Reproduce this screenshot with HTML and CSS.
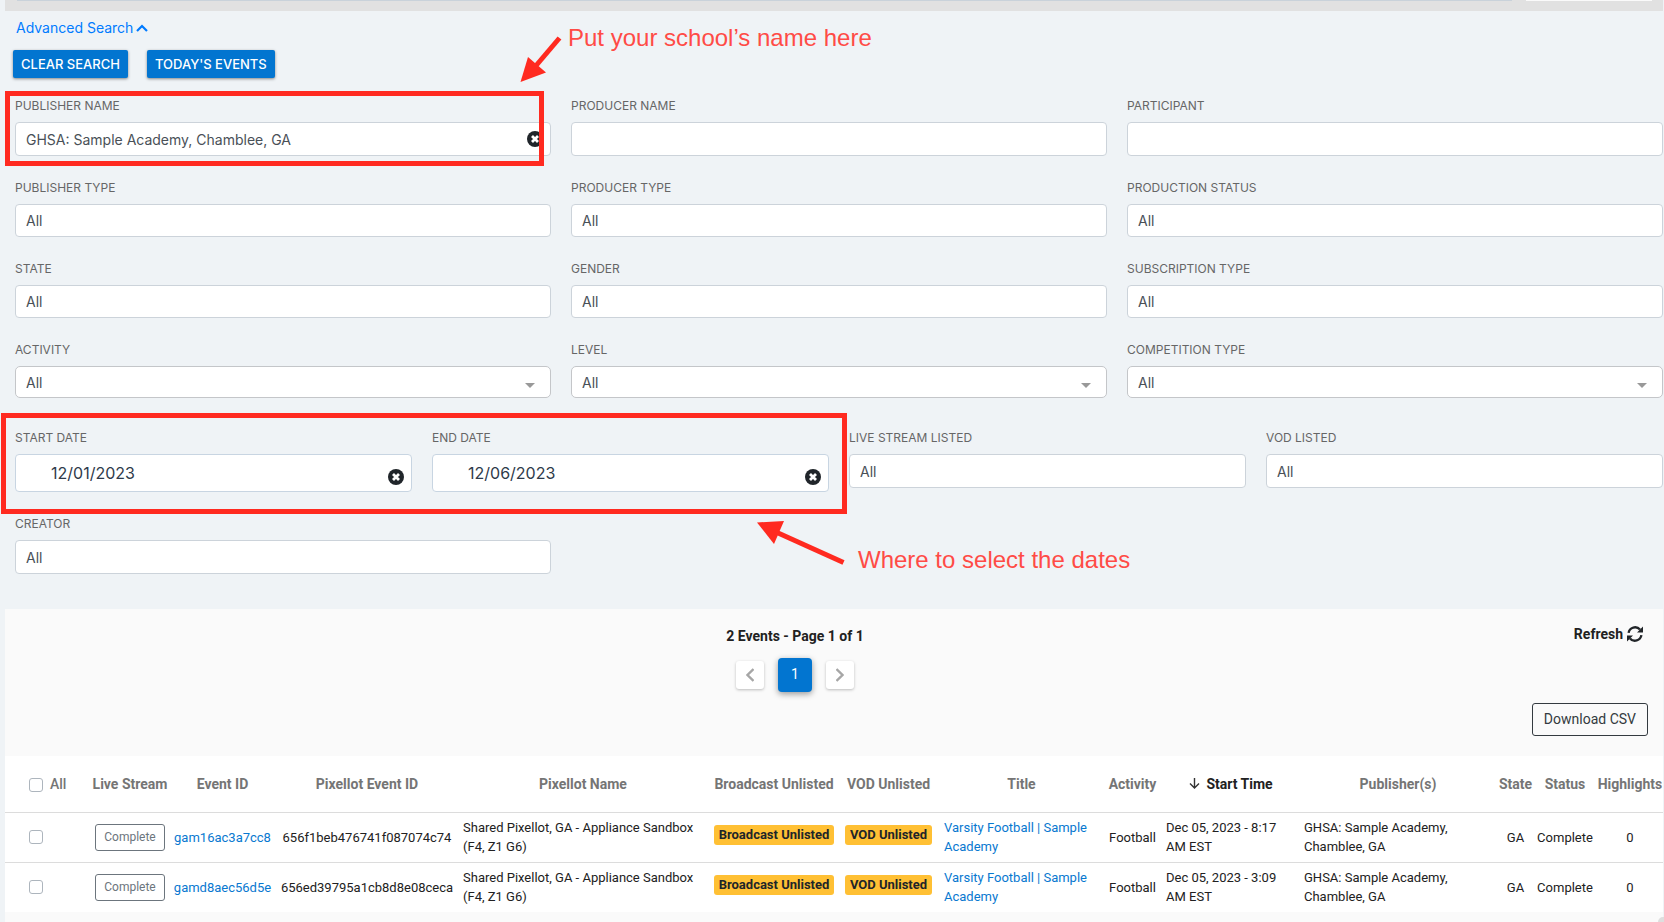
FILE: index.html
```html
<!DOCTYPE html>
<html lang="en">
<head>
<meta charset="utf-8">
<title>Events</title>
<link rel="stylesheet" href="styles.css">
</head>
<body>
<svg class="sprite" aria-hidden="true">
  <symbol id="clear" viewBox="0 0 16 16"><circle cx="8" cy="8" r="8" fill="#20252a"/><path d="M5 5l6 6M11 5l-6 6" stroke="#fff" stroke-width="2.8"/></symbol>
  <symbol id="caret" viewBox="0 0 10 5"><path d="M0 0h10L5 5z" fill="#999"/></symbol>
</svg>
<div class="page">
  <header class="topbar"><span class="topbar-input"></span><span class="topbar-button"></span></header>

  <main class="search">
    <a class="advanced" href="#">Advanced Search
      <svg width="12" height="8" viewBox="0 0 12 8" aria-hidden="true"><path d="M1 7l5-5 5 5" fill="none" stroke="#007bff" stroke-width="2.2"/></svg></a>
    <div class="actions">
      <button class="btn-blue">CLEAR SEARCH</button>
      <button class="btn-blue">TODAY'S EVENTS</button>
    </div>

    <form class="filters">
      <div class="row three">
        <div class="field marked"><label for="publisher">PUBLISHER NAME</label>
          <div class="box"><input id="publisher" type="text" value="GHSA: Sample Academy, Chamblee, GA"><button type="button" class="clear" aria-label="Clear"><svg><use href="#clear"/></svg></button></div></div>
        <div class="field"><label for="producer">PRODUCER NAME</label><input id="producer" type="text"></div>
        <div class="field"><label for="participant">PARTICIPANT</label><input id="participant" type="text"></div>
      </div>
      <div class="row three short">
        <div class="field"><label for="ptype">PUBLISHER TYPE</label><select id="ptype"><option>All</option></select></div>
        <div class="field"><label for="prtype">PRODUCER TYPE</label><select id="prtype"><option>All</option></select></div>
        <div class="field"><label for="pstatus">PRODUCTION STATUS</label><select id="pstatus"><option>All</option></select></div>
      </div>
      <div class="row three short">
        <div class="field"><label for="state">STATE</label><select id="state"><option>All</option></select></div>
        <div class="field"><label for="gender">GENDER</label><select id="gender"><option>All</option></select></div>
        <div class="field"><label for="sub">SUBSCRIPTION TYPE</label><select id="sub"><option>All</option></select></div>
      </div>
      <div class="row three rounded">
        <div class="field"><label for="activity">ACTIVITY</label><div class="box"><select id="activity"><option>All</option></select><svg class="caret"><use href="#caret"/></svg></div></div>
        <div class="field"><label for="level">LEVEL</label><div class="box"><select id="level"><option>All</option></select><svg class="caret"><use href="#caret"/></svg></div></div>
        <div class="field"><label for="comp">COMPETITION TYPE</label><div class="box"><select id="comp"><option>All</option></select><svg class="caret"><use href="#caret"/></svg></div></div>
      </div>
      <div class="row four">
        <div class="field date"><label for="start">START DATE</label><div class="box"><input id="start" type="text" value="12/01/2023"><button type="button" class="clear" aria-label="Clear"><svg><use href="#clear"/></svg></button></div></div>
        <div class="field date"><label for="end">END DATE</label><div class="box"><input id="end" type="text" value="12/06/2023"><button type="button" class="clear" aria-label="Clear"><svg><use href="#clear"/></svg></button></div></div>
        <div class="field"><label for="live">LIVE STREAM LISTED</label><select id="live"><option>All</option></select></div>
        <div class="field"><label for="vod">VOD LISTED</label><select id="vod"><option>All</option></select></div>
      </div>
      <div class="row three">
        <div class="field"><label for="creator">CREATOR</label><select id="creator"><option>All</option></select></div>
      </div>
    </form>
  </main>

  <section class="results">
    <div class="summary">
      <strong class="count">2 Events - Page 1 of 1</strong>
      <button class="refresh">Refresh
        <svg width="16" height="16" viewBox="0 0 16 16" aria-hidden="true"><path d="M1.6 6.8A6.5 6.5 0 0 1 13 3.6M14.4 9.2A6.5 6.5 0 0 1 3 12.4" fill="none" stroke="#212529" stroke-width="2.3"/><path d="M16 .6v6h-6zM0 15.4v-6h6z" fill="#212529"/></svg></button>
    </div>
    <nav class="pager" aria-label="Pages">
      <button class="step" aria-label="Previous"><svg width="8" height="14" viewBox="0 0 8 14"><path d="M7.5 1l-6 6 6 6" fill="none" stroke="#a6a6a6" stroke-width="2.4"/></svg></button>
      <button class="current">1</button>
      <button class="step" aria-label="Next"><svg width="8" height="14" viewBox="0 0 8 14"><path d="M.5 1l6 6-6 6" fill="none" stroke="#a6a6a6" stroke-width="2.4"/></svg></button>
    </nav>
    <div class="export"><button class="csv">Download CSV</button></div>

    <table class="events">
      <colgroup><col class="c-check"><col class="c-live"><col class="c-id"><col class="c-pid"><col class="c-name"><col class="c-bcast"><col class="c-vod"><col class="c-title"><col class="c-act"><col class="c-start"><col class="c-pub"><col class="c-state"><col class="c-status"><col class="c-high"></colgroup>
      <thead><tr>
        <th class="check"><label><input type="checkbox">All</label></th>
        <th>Live Stream</th><th>Event ID</th><th>Pixellot Event ID</th><th>Pixellot Name</th><th>Broadcast Unlisted</th><th>VOD Unlisted</th><th>Title</th><th>Activity</th>
        <th class="sorted"><svg width="11" height="11" viewBox="0 0 11 11" aria-hidden="true"><path d="M5.5 0v10M1 5.5l4.5 4.5L10 5.5" fill="none" stroke="#333" stroke-width="1.4"/></svg>Start Time</th>
        <th>Publisher(s)</th><th>State</th><th>Status</th><th>Highlights</th>
      </tr></thead>
      <tbody>
        <tr>
          <td class="check"><input type="checkbox" aria-label="Select gam16ac3a7cc8"></td>
          <td><button class="complete">Complete</button></td>
          <td><a href="#">gam16ac3a7cc8</a></td>
          <td>656f1beb476741f087074c74</td>
          <td class="text">Shared Pixellot, GA - Appliance Sandbox (F4, Z1 G6)</td>
          <td><span class="badge">Broadcast Unlisted</span></td>
          <td><span class="badge">VOD Unlisted</span></td>
          <td class="text"><a href="#">Varsity Football | Sample Academy</a></td>
          <td>Football</td>
          <td class="text">Dec 05, 2023 - 8:17 AM EST</td>
          <td class="text publisher">GHSA: Sample Academy, Chamblee, GA</td>
          <td>GA</td><td>Complete</td><td>0</td>
        </tr>
        <tr>
          <td class="check"><input type="checkbox" aria-label="Select gamd8aec56d5e"></td>
          <td><button class="complete">Complete</button></td>
          <td><a href="#">gamd8aec56d5e</a></td>
          <td>656ed39795a1cb8d8e08ceca</td>
          <td class="text">Shared Pixellot, GA - Appliance Sandbox (F4, Z1 G6)</td>
          <td><span class="badge">Broadcast Unlisted</span></td>
          <td><span class="badge">VOD Unlisted</span></td>
          <td class="text"><a href="#">Varsity Football | Sample Academy</a></td>
          <td>Football</td>
          <td class="text">Dec 05, 2023 - 3:09 AM EST</td>
          <td class="text publisher">GHSA: Sample Academy, Chamblee, GA</td>
          <td>GA</td><td>Complete</td><td>0</td>
        </tr>
      </tbody>
    </table>
  </section>

  <span class="corner"></span>
  <div class="note note-name">
    <svg width="42" height="48" viewBox="0 0 42 48" aria-hidden="true"><path d="M39.5 4L14 34" stroke="#ff2a20" stroke-width="5"/><path d="M.5 48L8 23l18 15.5z" fill="#ff2a20"/></svg>
    <span>Put your school’s name here</span>
  </div>
  <div class="note note-dates">
    <svg width="88" height="46" viewBox="0 0 88 46" aria-hidden="true"><path d="M20 12.5L86.5 42.5" stroke="#ff2a20" stroke-width="5"/><path d="M0 2.5L27 1 17 24z" fill="#ff2a20"/></svg>
    <span>Where to select the dates</span>
  </div>
</div>
</body>
</html>
```

FILE: styles.css
```css
*, *::after { box-sizing: border-box; }

body {
  margin: 0;
  background: #eff3f6;
  color: #212121;
  font-family: Roboto, "Liberation Sans", sans-serif;
  font-size: 13px;
}

button, input, select { font: inherit; color: inherit; margin: 0; }
button { cursor: pointer; }
a { color: #0878d0; text-decoration: none; }

.sprite { display: none; }

.page {
  position: relative;
  display: flex;
  flex-direction: column;
  min-height: 100vh;
  padding: 0 1px 0 5px;
}

.topbar {
  display: flex;
  gap: 14px;
  height: 11px;
  padding: 0 11px 0 12px;
  background: #e1e1e1;
}
.topbar-input { flex: 1; height: 1px; background: #c9d2da; }
.topbar-button { width: 126px; height: 1px; background: #fafafa; }

/* Search form */
.search {
  padding: 7px 0 35px 10px;
  font-family: Inter, "Liberation Sans", sans-serif;
}

.advanced {
  display: flex;
  align-items: center;
  gap: 3px;
  width: max-content;
  margin-left: 1px;
  font-size: 14px;
  line-height: 20px;
  color: #007bff;
}

.actions {
  display: flex;
  gap: 19px;
  margin: 12px 0 20px -2px;
}
.btn-blue {
  height: 28px;
  padding: 0 8px;
  border: 0;
  border-radius: 2px;
  background: #0275d0;
  box-shadow: 0 1px 3px rgba(0, 0, 0, .45);
  color: #fff;
  font-size: 13px;
  font-weight: 500;
}

.row {
  position: relative;
  display: grid;
  gap: 20px;
  align-items: start;
  margin-bottom: 24px;
}
.three { grid-template-columns: repeat(3, 1fr); }
.four { grid-template-columns: repeat(4, 1fr); }
.rounded { margin-bottom: 32px; }
.row:last-child { margin-bottom: 0; }

.field { position: relative; min-width: 0; }
.field > label {
  display: block;
  margin-bottom: 8px;
  font-size: 12px;
  line-height: 16px;
  color: #666;
}
.box { position: relative; }

.field input, .field select {
  display: block;
  width: 100%;
  height: 34px;
  padding: 0 10px;
  appearance: none;
  border: 1px solid #ccd3da;
  border-radius: 4px;
  background: #fff;
  color: #495057;
  font-size: 14px;
}
.field input { padding-top: 1px; }
.short .field select { height: 33px; }
.rounded .field select { height: 32px; padding-top: 1px; border-color: #c4c6c9; border-radius: 5px; }
.field.date input { height: 38px; padding: 0 35px; border-color: #c8d5e2; color: #2e3a4a; font-size: 16px; }

.clear {
  position: absolute;
  top: 9px;
  right: 8px;
  width: 16px;
  height: 16px;
  padding: 0;
  border: 0;
  background: none;
}
.clear svg { display: block; width: 16px; height: 16px; }
.date .clear { top: 15px; }
.caret { position: absolute; top: 17px; right: 16px; width: 10px; height: 5px; }

/* Red outlines over the fields to fill in */
.marked::after, .four::after {
  content: "";
  position: absolute;
  border: 5px solid #ff2a20;
  pointer-events: none;
}
.marked::after { inset: -7px 7px -10px -10px; }
.four::after { top: -17px; bottom: -22px; left: -14px; width: calc(50% + 22px); }

/* Results */
.results { flex: 1; background: #fafafa; }

.summary {
  display: grid;
  grid-template-columns: 1fr auto 1fr;
  align-items: start;
  padding: 15px 20px 0 0;
}
.count { grid-column: 2; margin: 2px 58px 0 0; font-size: 14px; line-height: 20px; }
.refresh {
  justify-self: end;
  display: flex;
  align-items: center;
  gap: 4px;
  padding: 0;
  border: 0;
  background: none;
  font-size: 14px;
  font-weight: 700;
  line-height: 20px;
}

.pager {
  display: flex;
  justify-content: center;
  align-items: center;
  gap: 14px;
  padding: 12px 78px 0 0;
}
.pager button {
  display: grid;
  place-items: center;
  padding: 0;
  border: 0;
}
.step { width: 28px; height: 28px; border-radius: 3px; background: #fff; box-shadow: 0 1px 3px rgba(0, 0, 0, .25); }
.pager .current { width: 34px; height: 34px; padding-bottom: 2px; border-radius: 4px; background: #0275d0; box-shadow: 0 2px 6px rgba(0, 0, 0, .4); color: #fff; font-size: 14px; }

.export { display: flex; justify-content: flex-end; padding: 11px 15px 20px 0; }
.csv {
  height: 33px;
  padding: 0 11px 1px;
  border: 1px solid #343a40;
  border-radius: 3px;
  background: none;
  color: #343a40;
  font-size: 14px;
}

.events {
  width: 100%;
  table-layout: fixed;
  border-collapse: collapse;
  background: #fff;
  line-height: 19px;
  text-align: center;
}
.c-check { width: 87px; } .c-live { width: 76px; } .c-id { width: 109px; }
.c-pid { width: 180px; } .c-name { width: 252px; } .c-bcast { width: 130px; }
.c-vod { width: 99px; } .c-title { width: 167px; } .c-act { width: 55px; }
.c-start { width: 138px; } .c-pub { width: 200px; } .c-state { width: 35px; }
.c-status { width: 64px; } .c-high { width: 66px; }

.events th { height: 56px; padding: 2px 0 0; color: #757575; font-size: 14px; font-weight: 700; white-space: nowrap; }
.events td { height: 50px; padding: 0; border-top: 1px solid #dcdcdc; }
.events .text { padding: 0 6px; text-align: left; }
.events .publisher { padding-right: 40px; }
.events .sorted { padding-left: 4px; color: #212121; }
.sorted svg { margin-right: 6px; }
.events .check { padding-left: 24px; text-align: left; font-weight: 500; }
.check label { display: flex; align-items: center; gap: 7px; }
.check input {
  display: block;
  width: 14px;
  height: 14px;
  appearance: none;
  border: 1px solid #adb5bd;
  border-radius: 3px;
  background: #fff;
}
.complete {
  height: 27px;
  padding: 0 8px;
  border: 1px solid #6c757d;
  border-radius: 3px;
  background: #fff;
  color: #6c757d;
  font-size: 12px;
}
.badge {
  display: inline-block;
  padding: 0 5px 1px;
  border-radius: 3px;
  background: #ffc034;
  color: #212529;
  font-weight: 700;
  vertical-align: 5px;
}

/* Window's rounded corner showing at the bottom right */
.corner {
  position: absolute;
  right: 0;
  bottom: 0;
  width: 6px;
  height: 5px;
  border-top-left-radius: 6px;
  background: #dedede;
}

/* Annotations lying over the page */
.note {
  position: absolute;
  display: flex;
  color: #ff4b46;
  font-family: "Liberation Sans", sans-serif;
  font-size: 24px;
  line-height: 28px;
  white-space: nowrap;
}
.note-name { top: 34px; left: 520px; gap: 6px; align-items: flex-start; }
.note-name span { margin-top: -10px; }
.note-dates { top: 520px; left: 757px; gap: 13px; align-items: flex-end; }
.note-dates span { margin-bottom: -8px; }
```
